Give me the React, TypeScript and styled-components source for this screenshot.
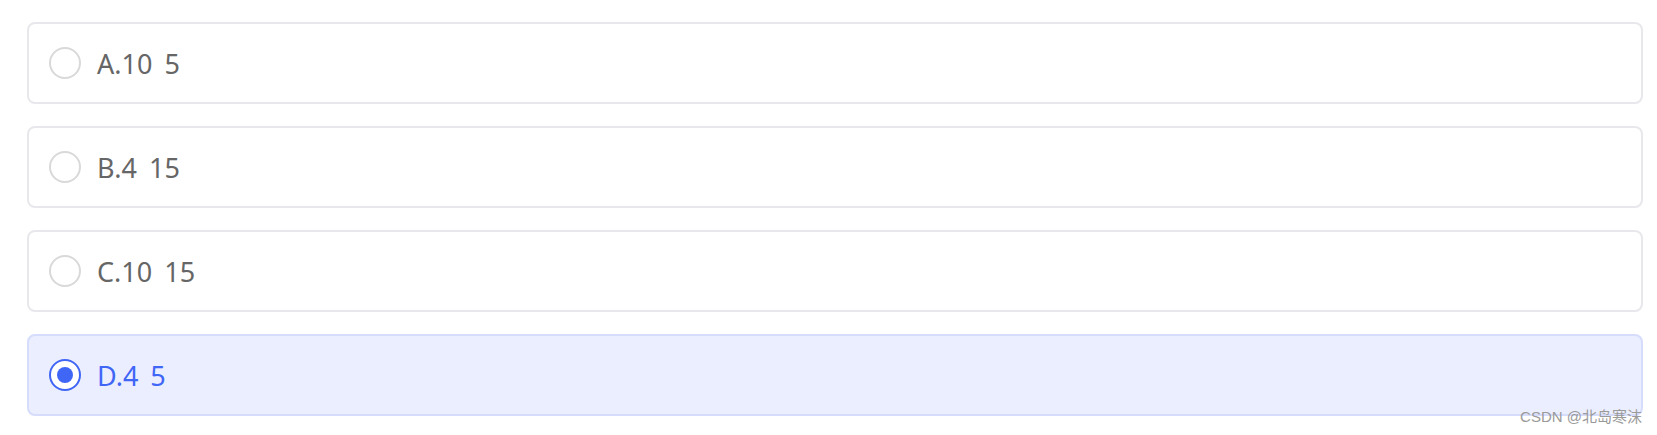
import { createGlobalStyle, styled } from "styled-components";

const GlobalStyle = createGlobalStyle`
  html, body {
    margin: 0;
    padding: 0;
    background: #ffffff;
  }
  body {
    font-family: "Noto Sans", "Noto Sans CJK SC", sans-serif;
  }
`;

const Page = styled.div`
  position: relative;
  height: 435px;
  box-sizing: border-box;
  padding: 22px 14px 0 27px;
`;

const OptionList = styled.div`
  display: flex;
  flex-direction: column;
  gap: 22px;
`;

const Option = styled.div<{ $selected?: boolean }>`
  height: 82px;
  box-sizing: border-box;
  display: flex;
  align-items: center;
  gap: 16px;
  padding-left: 20px;
  border-radius: 8px;
  border: 2px solid ${(p) => (p.$selected ? "#d6dcfc" : "#e8e8ec")};
  background: ${(p) => (p.$selected ? "#ebeeff" : "#ffffff")};
  cursor: pointer;
`;

const Radio = styled.span<{ $selected?: boolean }>`
  width: 32px;
  height: 32px;
  box-sizing: border-box;
  border-radius: 50%;
  border: 2px solid ${(p) => (p.$selected ? "#4066f6" : "#d9d9d9")};
  background: #ffffff;
  display: flex;
  align-items: center;
  justify-content: center;
  flex-shrink: 0;

  &::after {
    content: "";
    width: 16px;
    height: 16px;
    border-radius: 50%;
    background: #4066f6;
    display: ${(p) => (p.$selected ? "block" : "none")};
  }
`;

const Label = styled.span<{ $selected?: boolean }>`
  font-size: 27px;
  line-height: 1;
  word-spacing: 5px;
  color: ${(p) => (p.$selected ? "#4066f6" : "#666666")};
  white-space: pre;
`;

const Watermark = styled.span`
  position: absolute;
  right: 15px;
  bottom: 9px;
  font-size: 15px;
  color: #9a9a9a;
  font-family: "Liberation Sans", "Noto Sans CJK SC", sans-serif;
`;

const options = [
  { key: "A", text: "10 5" },
  { key: "B", text: "4 15" },
  { key: "C", text: "10 15" },
  { key: "D", text: "4 5" },
];

export default function App() {
  const selected = "D";
  return (
    <>
      <GlobalStyle />
      <Page>
        <OptionList>
          {options.map((o) => (
            <Option key={o.key} $selected={o.key === selected}>
              <Radio $selected={o.key === selected} />
              <Label $selected={o.key === selected}>
                {o.key}.{o.text}
              </Label>
            </Option>
          ))}
        </OptionList>
        <Watermark>CSDN @北岛寒沫</Watermark>
      </Page>
    </>
  );
}
